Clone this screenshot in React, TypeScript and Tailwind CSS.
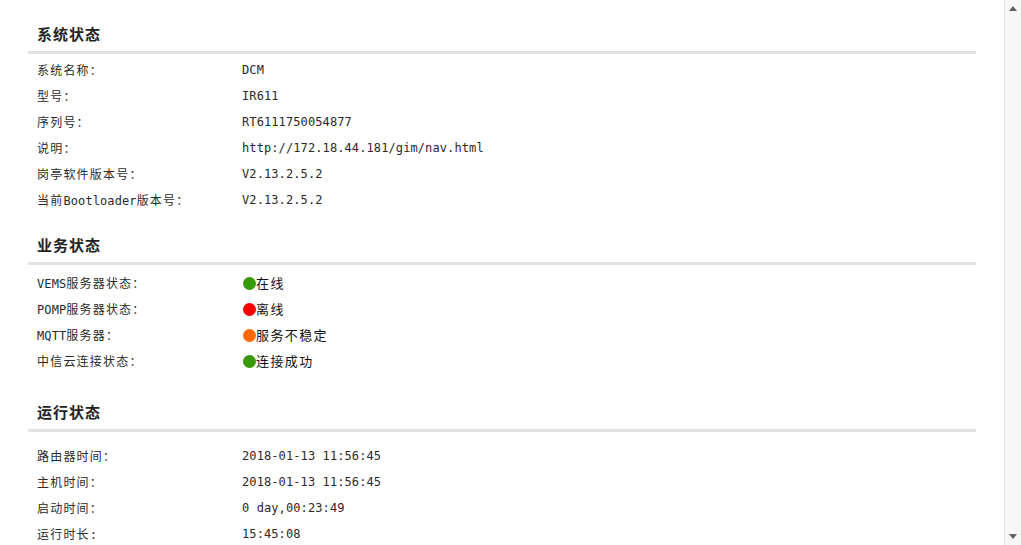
import React from 'react';

type Row = { label: string; value: string; dot?: 'green' | 'red' | 'orange' };

const systemRows: Row[] = [
  { label: '系统名称：', value: 'DCM' },
  { label: '型号：', value: 'IR611' },
  { label: '序列号：', value: 'RT6111750054877' },
  { label: '说明：', value: 'http://172.18.44.181/gim/nav.html' },
  { label: '岗亭软件版本号：', value: 'V2.13.2.5.2' },
  { label: '当前Bootloader版本号：', value: 'V2.13.2.5.2' },
];

const serviceRows: Row[] = [
  { label: 'VEMS服务器状态：', value: '在线', dot: 'green' },
  { label: 'POMP服务器状态：', value: '离线', dot: 'red' },
  { label: 'MQTT服务器：', value: '服务不稳定', dot: 'orange' },
  { label: '中信云连接状态：', value: '连接成功', dot: 'green' },
];

const runRows: Row[] = [
  { label: '路由器时间：', value: '2018-01-13 11:56:45' },
  { label: '主机时间：', value: '2018-01-13 11:56:45' },
  { label: '启动时间：', value: '0 day,00:23:49' },
  { label: '运行时长:', value: '15:45:08' },
];

// split text into CJK / latin runs so each gets its own font + spacing
function Mixed({ text }: { text: string }) {
  const parts = text.split(/([\u3000-\u9fff\uff00-\uffef]+)/).filter(Boolean);
  return (
    <>
      {parts.map((p, i) =>
        /[\u3000-\u9fff\uff00-\uffef]/.test(p) ? (
          <span key={i} className="font-['Noto_Sans_CJK_SC',sans-serif] tracking-[1.2px]">
            {p}
          </span>
        ) : (
          <span key={i} className="font-['DejaVu_Sans_Mono',monospace] tracking-[0.1px]">
            {p}
          </span>
        )
      )}
    </>
  );
}

const dotColor = {
  green: 'bg-[#379a0a]',
  red: 'bg-[#f40000]',
  orange: 'bg-[#ff6a00]',
};

function InfoRow({ row }: { row: Row }) {
  return (
    <div className="flex items-center h-[26px] pl-[9px] text-[12px] text-[#2a2a2a]">
      <div className="w-[205px] shrink-0 whitespace-nowrap">
        <Mixed text={row.label} />
      </div>
      <div className="flex items-center whitespace-nowrap">
        {row.dot ? (
          <>
            <span className={`inline-block w-[13px] h-[13px] rounded-full ml-[1px] ${dotColor[row.dot]}`} />
            <span className="font-['Noto_Sans_CJK_SC',sans-serif] text-[13px] tracking-[1.4px] text-[#111]">
              {row.value}
            </span>
          </>
        ) : (
          <Mixed text={row.value} />
        )}
      </div>
    </div>
  );
}

function Section({
  title,
  rows,
  className,
  rowsClass,
}: {
  title: string;
  rows: Row[];
  className: string;
  rowsClass: string;
}) {
  return (
    <section className={className}>
      <h2 className="h-5 leading-5 pl-[9px] text-[15px] font-bold tracking-[1px] text-[#222] font-['Noto_Sans_CJK_SC',sans-serif]">
        {title}
      </h2>
      <div className="mt-[7px] h-[3px] w-[948px] bg-[#e2e2e2]" />
      <div className={rowsClass}>
        {rows.map((r) => (
          <InfoRow key={r.label} row={r} />
        ))}
      </div>
    </section>
  );
}

function FakeScrollbar() {
  return (
    <div className="w-[17px] h-[545px] shrink-0 bg-[#f7f7f7] border-l border-[#e6e6e6] flex flex-col justify-between items-center py-[6px]">
      <div className="w-0 h-0 border-l-[4px] border-r-[4px] border-b-[5px] border-l-transparent border-r-transparent border-b-[#606060]" />
      <div className="w-0 h-0 border-l-[4px] border-r-[4px] border-t-[5px] border-l-transparent border-r-transparent border-t-[#606060]" />
    </div>
  );
}

export default function App() {
  return (
    <div className="flex w-[1021px] h-[545px] overflow-hidden bg-white">
      <main className="w-[1004px] shrink-0 pl-[28px] pt-[24px]">
        <Section title="系统状态" rows={systemRows} className="" rowsClass="pt-[3px]" />
        <Section title="业务状态" rows={serviceRows} className="mt-[22px]" rowsClass="pt-[5px]" />
        <Section title="运行状态" rows={runRows} className="mt-[28px]" rowsClass="pt-[11px]" />
      </main>
      <FakeScrollbar />
    </div>
  );
}
